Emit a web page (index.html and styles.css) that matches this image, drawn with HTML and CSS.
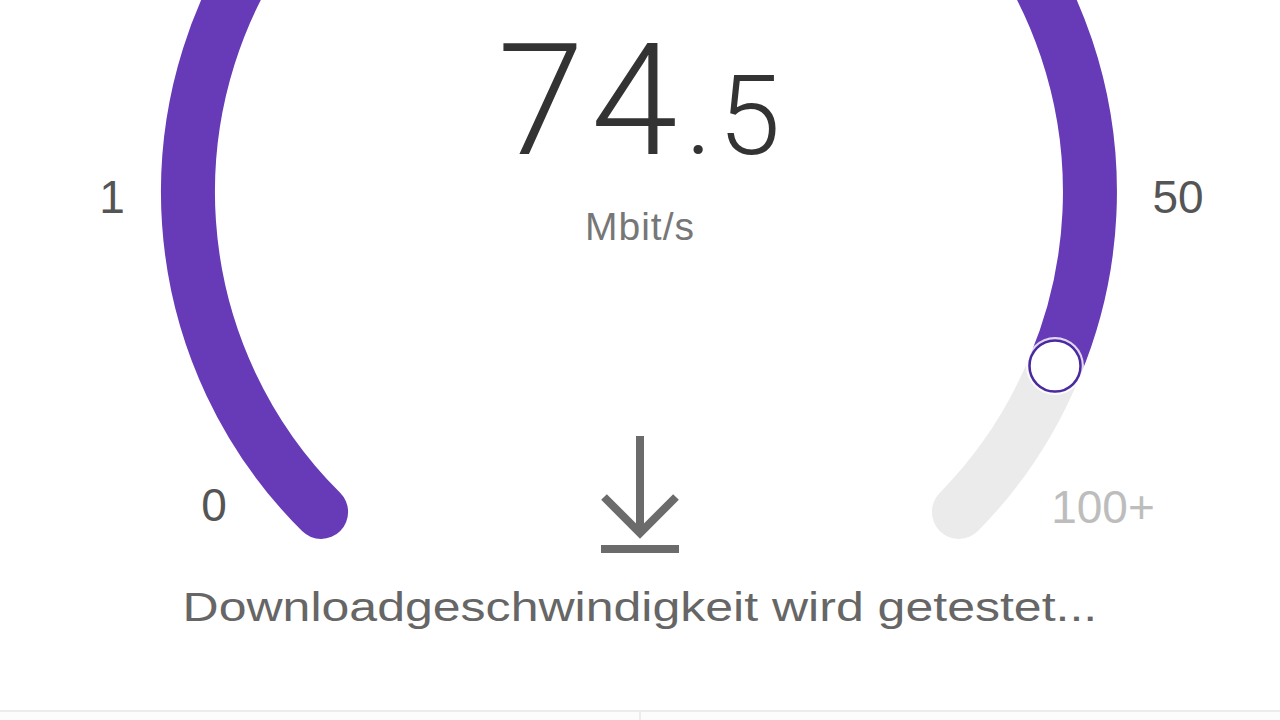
FILE: index.html
```html
<!DOCTYPE html>
<html lang="de">
<head>
<meta charset="utf-8">
<title>Speedtest</title>
<link rel="stylesheet" href="styles.css">
</head>
<body>
<div class="app">
  <main class="gauge">
    <svg class="dial" width="1280" height="710" viewBox="0 0 1280 710" aria-hidden="true">
      <path class="track" d="M1055 366 A451 451 0 0 1 958.9 511.9"/>
      <path class="fill" d="M321.1 511.9 A451 451 0 1 1 1055 366"/>
      <circle class="knob-halo" cx="1055" cy="366" r="29"/>
      <circle class="knob" cx="1055" cy="366" r="25.5"/>
    </svg>
    <span class="tick tick-1">1</span>
    <span class="tick tick-50">50</span>
    <span class="tick tick-0">0</span>
    <span class="tick tick-max">100+</span>

    <div class="readout">
      <div class="value">74<span class="decimal">.5</span></div>
      <div class="unit">Mbit/s</div>
      <svg class="dl-icon" width="82" height="120" viewBox="0 0 82 120" aria-hidden="true">
        <path d="M41 0 V97 M5 61 L41 97 L77 61 M2 113 H80"/>
      </svg>
      <p class="caption">Downloadgeschwindigkeit wird getestet...</p>
    </div>
  </main>
  <footer class="footer">
    <div class="footer-cell footer-left"></div>
    <div class="footer-cell"></div>
  </footer>
</div>
</body>
</html>
```

FILE: styles.css
```css
html, body {
  margin: 0;
  padding: 0;
  background: #ffffff;
}

body {
  font-family: "Liberation Sans", Arial, sans-serif;
  width: 1280px;
  height: 720px;
  overflow: hidden;
}

.app {
  display: flex;
  flex-direction: column;
  height: 720px;
}

.gauge {
  position: relative;
  height: 710px;
  flex: none;
}

.dial {
  position: absolute;
  left: 0;
  top: 0;
}

.track {
  fill: none;
  stroke: #ebebeb;
  stroke-width: 54;
  stroke-linecap: round;
}

.fill {
  fill: none;
  stroke: #673ab7;
  stroke-width: 54;
  stroke-linecap: round;
}

.knob-halo {
  fill: #ffffff;
  opacity: 0.8;
}

.knob {
  fill: #ffffff;
  stroke: #4a2a9e;
  stroke-width: 2.5;
}

.tick {
  position: absolute;
  font-size: 46px;
  line-height: 1;
  color: #555555;
  transform: translateX(-50%);
}

.tick-1 { left: 112px; top: 174px; }
.tick-50 { left: 1178px; top: 174px; }
.tick-0 { left: 214px; top: 482px; }
.tick-max { left: 1103px; top: 484px; color: #bdbdbd; }

.readout {
  position: relative;
  display: flex;
  flex-direction: column;
  align-items: center;
  padding-top: 23px;
}

.value {
  font-family: Roboto, "Liberation Sans", sans-serif;
  font-weight: 300;
  font-size: 156px;
  line-height: 156px;
  height: 156px;
  color: #333333;
  letter-spacing: 7px;
  margin-left: 4px;
}

.decimal {
  font-size: 112px;
  line-height: 1;
  letter-spacing: 6px;
  margin-left: 1px;
}

.unit {
  margin-top: 28px;
  font-size: 39px;
  line-height: 1;
  color: #777777;
  letter-spacing: 1px;
}

.dl-icon {
  display: block;
  margin-top: 190px;
}

.dl-icon path {
  fill: none;
  stroke: #6b6b6b;
  stroke-width: 8;
}

.caption {
  margin: 31px 0 0;
  font-size: 41px;
  line-height: 1;
  color: #666666;
  transform: scaleX(1.22);
}

.footer {
  display: flex;
  flex: 1;
  border-top: 2px solid #ececec;
  background: #fcfcfc;
}

.footer-cell {
  flex: 1;
}

.footer-left {
  border-right: 2px solid #ececec;
}
```
